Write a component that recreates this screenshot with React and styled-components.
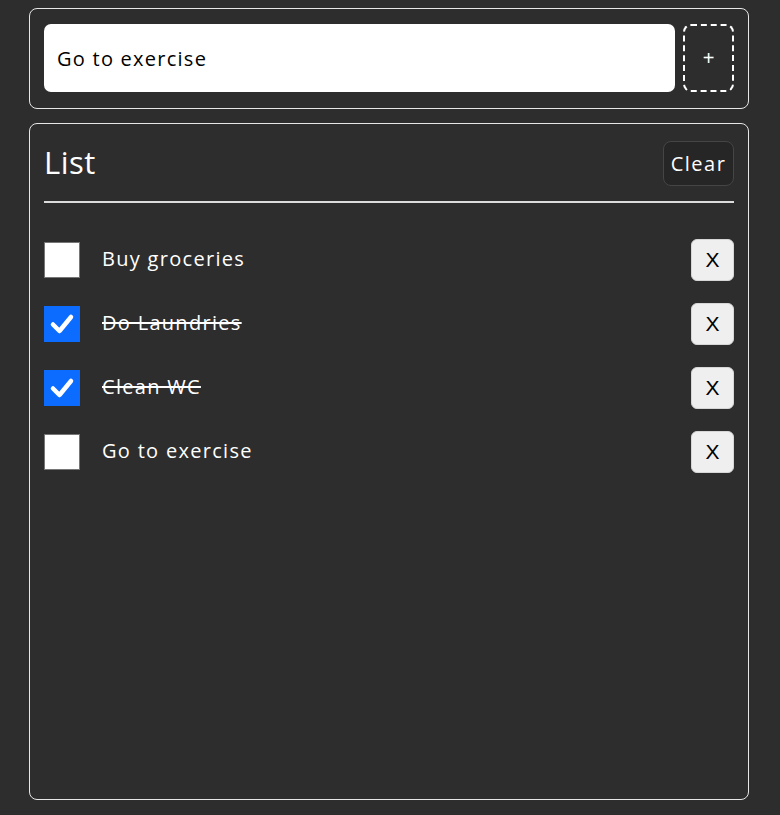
import React from "react";
import styled, { createGlobalStyle } from "styled-components";

const Global = createGlobalStyle`
  html, body { margin: 0; padding: 0; background: #2d2d2d; }
  body { font-family: "Open Sans", "Noto Sans", sans-serif; color: #fff; }
  * { box-sizing: border-box; }
`;

const Page = styled.div`
  display: flex;
  flex-direction: column;
  gap: 14px;
  padding: 8px 31px 15px 29px;
  height: 100vh;
`;

const Card = styled.section`
  border: 1px solid #e6e6e6;
  border-radius: 8px;
  padding: ${(p) => p.$pad || "15px 14px 16px"};
  ${(p) => (p.$grow ? "flex: 1; min-height: 0;" : "")}
`;

const InputRow = styled.div`
  display: flex;
  gap: 8px;
  height: 68px;
`;

const TextInput = styled.div`
  flex: 1;
  background: #fff;
  border-radius: 7px;
  color: #000;
  font-size: 20px;
  letter-spacing: 1.25px;
  display: flex;
  align-items: center;
  padding-left: 13px;
`;

const AddButton = styled.button`
  width: 51px;
  background: transparent;
  border: 2px dashed #fff;
  border-radius: 8px;
  color: #fff;
  font-family: "Liberation Sans", Arial, sans-serif;
  font-size: 20px;
  padding: 0;
`;

const Header = styled.div`
  display: flex;
  align-items: center;
  justify-content: space-between;
  padding: 17px 0 15px;
  border-bottom: 2px solid #dcdcdc;
  margin-bottom: 36px;
`;

const Title = styled.h1`
  margin: 0 0 4px;
  font-size: 31px;
  font-weight: 500;
  line-height: 40px;
  letter-spacing: 0.5px;
`;

const ClearButton = styled.button`
  width: 71px;
  height: 45px;
  border-radius: 8px;
  background: #262626;
  border: 1px solid #454545;
  color: #fff;
  font-family: inherit;
  font-size: 20px;
  letter-spacing: 1.5px;
  padding: 0;
`;

const Items = styled.ul`
  list-style: none;
  margin: 0;
  padding: 0;
  display: flex;
  flex-direction: column;
  gap: 22px;
`;

const Item = styled.li`
  display: flex;
  align-items: center;
  height: 42px;
`;

const Box = styled.span`
  width: 36px;
  height: 36px;
  flex: none;
  display: flex;
  align-items: center;
  justify-content: center;
  background: ${(p) => (p.$checked ? "#0b6cff" : "#fff")};
  border: ${(p) => (p.$checked ? "none" : "1px solid #767676")};
`;

const Label = styled.span`
  flex: 1;
  margin-left: 22px;
  font-size: 20px;
  letter-spacing: 1.3px;
  line-height: 28px;
  margin-top: -2px;
  text-decoration: ${(p) => (p.$done ? "line-through" : "none")};
  text-decoration-thickness: 2px;
`;

const RemoveButton = styled.button`
  width: 43px;
  height: 42px;
  border-radius: 6px;
  background: #efefef;
  border: 1px solid #d6d6d6;
  color: #000;
  font-family: "Liberation Sans", Arial, sans-serif;
  font-size: 21px;
  padding: 0;
`;

const Check = () => (
  <svg width="26" height="26" viewBox="0 0 26 26">
    <path d="M4 13.5 L10.5 20 L22 6" fill="none" stroke="#fff" strokeWidth="4.5" strokeLinecap="round" strokeLinejoin="round" />
  </svg>
);

const todos = [
  { text: "Buy groceries", done: false },
  { text: "Do Laundries", done: true },
  { text: "Clean WC", done: true },
  { text: "Go to exercise", done: false },
];

export default function App() {
  return (
    <>
      <Global />
      <Page>
        <Card>
          <InputRow>
            <TextInput>Go to exercise</TextInput>
            <AddButton>+</AddButton>
          </InputRow>
        </Card>
        <Card $grow $pad="0 14px">
          <Header>
            <Title>List</Title>
            <ClearButton>Clear</ClearButton>
          </Header>
          <Items>
            {todos.map((t) => (
              <Item key={t.text}>
                <Box $checked={t.done}>{t.done && <Check />}</Box>
                <Label $done={t.done}>{t.text}</Label>
                <RemoveButton>X</RemoveButton>
              </Item>
            ))}
          </Items>
        </Card>
      </Page>
    </>
  );
}
